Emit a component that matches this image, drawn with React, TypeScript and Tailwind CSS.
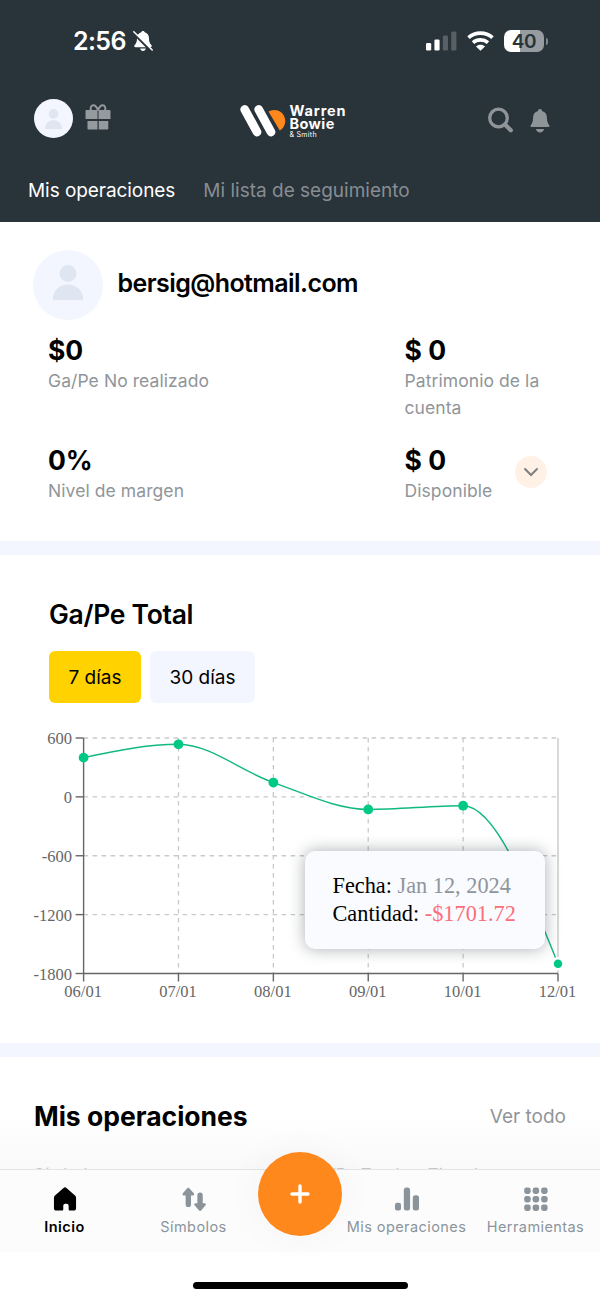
import type { ReactNode } from "react";

const points = [
  { day: "06/01", value: 400 },
  { day: "07/01", value: 536 },
  { day: "08/01", value: 146 },
  { day: "09/01", value: -128 },
  { day: "10/01", value: -90 },
  { day: "12/01", value: -1701.72 },
];

const yTicks = [600, 0, -600, -1200, -1800];

const plot = { left: 83.6, right: 558, top: 18, bottom: 253.5 };

const xAt = (i: number) => plot.left + (i * (plot.right - plot.left)) / (points.length - 1);
const yAt = (value: number) => plot.top + ((600 - value) / 2400) * (plot.bottom - plot.top);

// Monotone cubic interpolation, x values are evenly spaced
function monotonePath(coords: Array<[number, number]>) {
  const n = coords.length;
  const step = coords[1][0] - coords[0][0];
  const slopes = coords.slice(1).map(([, y], i) => (y - coords[i][1]) / step);
  const tangents = coords.map((_, i) => {
    if (i === 0 || i === n - 1) return 0;
    const a = slopes[i - 1];
    const b = slopes[i];
    if (a * b <= 0) return 0;
    return Math.sign(a) * 2 * Math.min(Math.abs(a), Math.abs(b), Math.abs(a + b) / 4);
  });
  tangents[0] = (3 * slopes[0] - tangents[1]) / 2;
  tangents[n - 1] = (3 * slopes[n - 2] - tangents[n - 2]) / 2;

  const third = step / 3;
  return coords.slice(1).reduce((d, [x, y], i) => {
    const [px, py] = coords[i];
    return `${d} C${px + third},${py + tangents[i] * third} ${x - third},${y - tangents[i + 1] * third} ${x},${y}`;
  }, `M${coords[0][0]},${coords[0][1]}`);
}

function PersonIcon({ className }: { className?: string }) {
  return (
    <svg viewBox="0 0 30 35" className={className} fill="#e0e5f2">
      <circle cx="15" cy="8.5" r="8.5" />
      <path d="M0 35v-1.5a15 14 0 0 1 30 0V35Z" />
    </svg>
  );
}

function StatusBar() {
  return (
    <div className="flex h-[80px] items-center pl-[73px] pr-[52px] pt-[2px] text-white">
      <span className="w-[54px] text-[25px] font-semibold leading-none tracking-[-0.6px]">2:56</span>
      <svg viewBox="0 0 20 22" className="ml-[5.500px] h-[22px] w-[20px]">
        <path
          fill="#fff"
          d="M10 1c.9 0 1.600.6 1.800 1.300C14.700 3.100 16 5.500 16 8.300c0 3.200.7 5 1.900 6.300.5.500.9 1 .9 1.500 0 .700-.5 1.100-1.300 1.100h-15c-.8 0-1.300-.4-1.300-1.100 0-.5.400-1 .9-1.500C3.300 13.300 4 11.500 4 8.300c0-2.800 1.300-5.200 4.200-6C8.400 1.600 9.100 1 10 1ZM7.200 18.500h5.600c-.2 1.500-1.300 2.500-2.800 2.500s-2.600-1-2.800-2.500Z"
        />
        <path d="M0.500 3.300 18 20.800" stroke="#29333a" strokeWidth="2.400" />
        <path d="M0.800 1.800 19.200 20" stroke="#fff" strokeWidth="1.500" strokeLinecap="round" />
      </svg>

      <svg viewBox="0 0 31 20" className="ml-auto h-[20px] w-[31px]" fill="#fff">
        <rect x="0" y="12" width="5.200" height="7.500" rx="1.300" />
        <rect x="8.400" y="8.500" width="5.200" height="11" rx="1.300" />
        <rect x="16.800" y="4.500" width="5.200" height="15" rx="1.300" opacity=".22" />
        <rect x="25.200" y="0.500" width="5.200" height="19" rx="1.300" opacity=".22" />
      </svg>
      <svg viewBox="0 0 27 20" className="ml-[10px] h-[20px] w-[27px]" fill="none" stroke="#fff" strokeWidth="3.700">
        <path d="M1.500 6.600C8.300.7 18.700.7 25.500 6.600" />
        <path d="M6 11.600c4.300-3.600 10.700-3.600 15 0" />
        <path d="M13.500 19.700 9 15.400c2.500-2.100 6.500-2.100 9 0Z" fill="#fff" stroke="none" />
      </svg>
      <div className="ml-[10px] flex h-[22px] w-[40px] items-center justify-center rounded-[7px] bg-linear-to-r from-white from-40% to-[#979ca1] to-40% text-[19px] font-semibold leading-none tracking-[-0.3px] text-[#29333a]">
        40
      </div>
      <div className="ml-[1.500px] h-[7px] w-[2.500px] rounded-r-full bg-[#7f858a]" />
    </div>
  );
}

function Logo() {
  return (
    <div className="flex items-start">
      <svg viewBox="0 0 46 34" className="h-[34px] w-[46px]">
        <path d="M28.500 7.500A10.300 10.300 0 0 1 39.800 26.500Z" fill="#ff881c" />
        <path d="M4.700 5.500 17 28" stroke="#29333a" strokeWidth="11" strokeLinecap="round" />
        <path d="M18.700 5.500 31 28" stroke="#29333a" strokeWidth="11" strokeLinecap="round" />
        <path d="M4.700 5.500 17 28" stroke="#fff" strokeWidth="8.800" strokeLinecap="round" />
        <path d="M18.700 5.500 31 28" stroke="#fff" strokeWidth="8.800" strokeLinecap="round" />
      </svg>
      <div className="ml-[4px] flex flex-col text-[14.500px] font-bold leading-[13px] text-white">
        <span className="tracking-[0.850px]">Warren</span>
        <span className="tracking-[0.400px]">Bowie</span>
        <span className="text-[7px] font-normal leading-[9px] tracking-[0.3px]">&amp; Smith</span>
      </div>
    </div>
  );
}

function AppBar() {
  return (
    <div className="flex h-[80px] items-start pl-[33.500px] pr-[50px] pt-[19px]">
      <div className="flex h-[39px] w-[39px] items-center justify-center rounded-full bg-[#f3f6ff]">
        <PersonIcon className="h-[20px] w-[17px]" />
      </div>
      <svg viewBox="0 0 26 26" className="ml-[12px] mt-[5px] h-[26px] w-[26px]" fill="#959a9e">
        <path d="M1.500 6h23c.6 0 1 .4 1 1v8h-12V6h-1v9H.5V7c0-.6.400-1 1-1Z" />
        <path d="M2.500 17h10v8.500h-9c-.6 0-1-.4-1-1ZM13.700 17h9.600V24.500c0 .6-.4 1-1 1h-8.600Z" />
        <path
          d="M13 6.500C12 3.500 10.500 1.300 8.300 1.300S5 3.500 6 6.500M13 6.500c1-3 2.500-5.200 4.700-5.200S21 3.500 20 6.500"
          fill="none"
          stroke="#959a9e"
          strokeWidth="1.900"
        />
      </svg>
      <div className="ml-[129px] mt-[4.500px]">
        <Logo />
      </div>
      <svg viewBox="0 0 26 26" className="ml-auto mt-[8px] h-[26px] w-[26px]" fill="none" stroke="#8f9499">
        <circle cx="10.500" cy="11" r="8.800" strokeWidth="3.300" />
        <path d="m17 17.500 5.800 5.800" strokeWidth="4.200" strokeLinecap="round" />
      </svg>
      <svg viewBox="0 0 20 24" className="ml-[16px] mt-[10px] h-[24px] w-[20px]" fill="#8f9499">
        <path d="M10 0c1.300 0 2 .8 2 1.900 3.200.8 4.900 3.300 4.900 6.600 0 4.200 1.100 6.200 2.400 7.800.6.800.2 1.700-.8 1.700h-17c-1 0-1.400-.9-.8-1.700C2 14.700 3.100 12.700 3.100 8.500c0-3.300 1.700-5.800 4.900-6.600C8 .8 8.700 0 10 0ZM6 20h8c-.3 2-1.900 3.500-4 3.500S6.300 22 6 20Z" />
      </svg>
    </div>
  );
}

function Header() {
  return (
    <header className="h-[222px] shrink-0 bg-[#29333a]">
      <StatusBar />
      <AppBar />
      <nav className="flex gap-[28px] pl-[28px] pt-[17px] text-[19px] leading-[28px]">
        <span className="tracking-[-0.060px] text-white">Mis operaciones</span>
        <span className="text-[#878d92]">Mi lista de seguimiento</span>
      </nav>
    </header>
  );
}

function Metric({ value, label }: { value: string; label: string }) {
  return (
    <div className="h-[110px]">
      <p className="text-[26.500px] font-bold leading-[33px]">{value}</p>
      <p className="text-[17.500px] leading-[27px] tracking-[0.080px] text-[#90959a]">{label}</p>
    </div>
  );
}

function AccountSummary() {
  return (
    <section className="h-[319px] shrink-0 pt-[28px]">
      <div className="flex items-start pl-[33px]">
        <div className="flex h-[70px] w-[70px] items-start justify-center rounded-full bg-[#f3f6ff] pt-[15px]">
          <PersonIcon className="h-[35px] w-[30px]" />
        </div>
        <h2 className="ml-[14.500px] mt-[18px] text-[25px] font-semibold leading-[30px] tracking-[-0.570px]">bersig@hotmail.com</h2>
      </div>
      <div className="mt-[14px] grid grid-cols-[356.500px_150px] pl-[48px]">
        <Metric value="$0" label="Ga/Pe No realizado" />
        <Metric value="$ 0" label="Patrimonio de la cuenta" />
        <Metric value="0%" label="Nivel de margen" />
        <div className="flex">
          <Metric value="$ 0" label="Disponible" />
          <button className="ml-auto mr-[8px] mt-[11.500px] flex h-[32px] w-[32px] items-center justify-center rounded-full bg-[#fff1e6]">
            <svg viewBox="0 0 16 10" className="h-[10px] w-[16px]" fill="none" stroke="#7d7f82" strokeWidth="2">
              <path d="m2 2 6 6 6-6" strokeLinecap="round" />
            </svg>
          </button>
        </div>
      </div>
    </section>
  );
}

function ProfitChart() {
  const coords = points.map((p, i): [number, number] => [xAt(i), yAt(p.value)]);

  return (
    <svg viewBox="0 0 600 290" className="block h-[290px] w-[600px] font-['Liberation_Serif',serif]">
      <g stroke="#c9c9c9" strokeWidth="1.300" strokeDasharray="4.500 4.500">
        {yTicks.slice(0, -1).map((tick) => (
          <line key={tick} x1={plot.left} x2={plot.right} y1={yAt(tick)} y2={yAt(tick)} />
        ))}
        {points.slice(1, -1).map((p, i) => (
          <line key={p.day} x1={xAt(i + 1)} x2={xAt(i + 1)} y1={plot.top} y2={plot.bottom} />
        ))}
      </g>
      <line x1={plot.right} x2={plot.right} y1={plot.top} y2={plot.bottom} stroke="#cccccc" strokeWidth="1.500" />
      <g stroke="#666666" strokeWidth="1.400">
        <path d={`M${plot.left} ${plot.top}V${plot.bottom}H${plot.right}`} fill="none" />
        {yTicks.map((tick) => (
          <line key={tick} x1={plot.left - 8} x2={plot.left} y1={yAt(tick)} y2={yAt(tick)} />
        ))}
        {points.map((p, i) => (
          <line key={p.day} x1={xAt(i)} x2={xAt(i)} y1={plot.bottom} y2={plot.bottom + 8} />
        ))}
      </g>
      <g fill="#666666" fontSize="16.500">
        {yTicks.map((tick) => (
          <text key={tick} x="72" y={yAt(tick) + 6} textAnchor="end">
            {tick}
          </text>
        ))}
        {points.map((p, i) => (
          <text key={p.day} x={xAt(i) - 0.5} y="276.500" textAnchor="middle">
            {p.day}
          </text>
        ))}
      </g>
      <path d={monotonePath(coords)} fill="none" stroke="#10b981" strokeWidth="1.400" />
      {coords.slice(0, -1).map(([x, y]) => (
        <circle key={x} cx={x} cy={y} r="4.900" fill="#00c983" />
      ))}
      <circle cx={coords[5][0]} cy={coords[5][1]} r="5.500" fill="#00c983" stroke="#fff" strokeWidth="2.500" />
    </svg>
  );
}

function ChartSection() {
  return (
    <section className="h-[488px] shrink-0 pt-[41px]">
      <h2 className="pl-[49px] text-[26.500px] font-semibold leading-[36px] tracking-[-0.300px]">Ga/Pe Total</h2>
      <div className="mt-[19px] flex gap-[9px] pl-[49px] text-[19px]">
        <button className="h-[52px] w-[92px] rounded-[6px] bg-[#ffd200] pt-[2px]">7 días</button>
        <button className="h-[52px] w-[105px] rounded-[6px] bg-[#f3f6ff] pt-[2px]">30 días</button>
      </div>
      <div className="relative mt-[17px]">
        <ProfitChart />
        <div className="absolute left-[305px] top-[131px] flex h-[98px] w-[240px] flex-col justify-center rounded-[10px] bg-[#fafbff] pl-[27.500px] font-['Liberation_Serif',serif] text-[22.300px] leading-[28px] shadow-[0_0_16px_rgba(41,51,58,0.4)]">
          <p>
            Fecha: <span className="text-[#8f959c]">Jan 12, 2024</span>
          </p>
          <p>
            Cantidad: <span className="text-[#fb6f7a]">-$1701.72</span>
          </p>
        </div>
      </div>
    </section>
  );
}

function OperationsSection() {
  return (
    <section className="h-[112px] shrink-0 overflow-hidden bg-linear-to-b from-white from-55% to-[#f9f9f9] pl-[34px] pr-[34px] pt-[40px]">
      <div className="flex items-center justify-between">
        <h2 className="text-[26.500px] font-bold leading-[38px]">Mis operaciones</h2>
        <span className="pt-[1px] text-[19px] leading-[28px] text-[#90959a]">Ver todo</span>
      </div>
      <div className="mt-[27px] flex whitespace-nowrap text-[16px] leading-[24px] text-[#c4c6c8]">
        <span className="w-[274px] tracking-[0.400px]">Símbolo</span>
        <span className="w-[86px] tracking-[0.400px]">Ga/Pe Total</span>
        <span className="ml-[34px] tracking-[0.400px]">Tipo de cuenta</span>
      </div>
    </section>
  );
}

function NavItem({ label, active, children }: { label: string; active?: boolean; children: ReactNode }) {
  return (
    <div className={`flex w-[129px] flex-col items-center ${active ? "font-semibold text-black" : "text-[#8b949b]"}`}>
      <svg viewBox="0 0 26 26" className="h-[25px] w-[26px]" fill="currentColor">
        {children}
      </svg>
      <span className="mt-[5px] whitespace-nowrap text-[14.500px] leading-[20px] tracking-[0.420px]">{label}</span>
    </div>
  );
}

function BottomNav() {
  return (
    <footer className="relative h-[131px] shrink-0 bg-white">
      <div className="flex h-[83px] border-t border-[#e3e4e5] bg-[#fcfcfc] pt-[17px]">
        <NavItem label="Inicio" active>
          <path d="M11.200 1.200a2.600 2.600 0 0 1 3.600 0l8.600 7.700c.8.700 1.100 1.500 1.100 2.500v10.600c0 1.600-.9 2.500-2.500 2.500h-3.900c-.9 0-1.300-.5-1.300-1.300v-3.500c0-1.500-.9-2.200-2.200-2.200h-1.200c-1.300 0-2.200.7-2.200 2.200v3.500c0 .8-.4 1.300-1.300 1.300H4c-1.600 0-2.500-.9-2.500-2.500V11.400c0-1 .3-1.800 1.100-2.500Z" />
        </NavItem>
        <NavItem label="Símbolos">
          <path d="M6 1.300c.6-.6 1.500-.6 2.100 0l4.700 5.300c.8.900.3 2.200-.9 2.200H9.900v9.300a2.800 2.800 0 0 1-5.600 0V8.800h-2c-1.200 0-1.700-1.300-.9-2.200Z" />
          <path d="M20.400 24.400c-.6.600-1.500.6-2.100 0l-4.700-5.300c-.8-.9-.3-2.200.9-2.200h2V8.600a2.800 2.800 0 0 1 5.600 0v8.300h2c1.200 0 1.700 1.300.9 2.200Z" />
        </NavItem>
        <div className="w-[84px]" />
        <NavItem label="Mis operaciones">
          <rect x="0.500" y="16.500" width="6.300" height="8" rx="2.200" />
          <rect x="9.700" y="0.500" width="6.500" height="24" rx="2.600" />
          <rect x="19" y="8.500" width="6.500" height="16" rx="2.600" />
        </NavItem>
        <NavItem label="Herramientas">
          {[3.9, 12.7, 21.5].map((cy) =>
            [4.1, 12.9, 21.7].map((cx) => <rect key={`${cx}-${cy}`} x={cx - 3.4} y={cy - 3.4} width="6.800" height="6.800" rx="2.500" />),
          )}
        </NavItem>
      </div>
      <button className="absolute left-[258px] top-[-17px] flex h-[84px] w-[84px] items-center justify-center rounded-full bg-[#ff881c] shadow-[0_0_40px_rgba(0,0,0,0.04)]">
        <svg viewBox="0 0 20 20" className="h-[20px] w-[20px]" stroke="#fff" strokeWidth="3.400" strokeLinecap="round">
          <path d="M10 2v16M2 10h16" />
        </svg>
      </button>
      <div className="mx-auto mt-[30px] h-[7px] w-[215px] rounded-full bg-black" />
    </footer>
  );
}

export default function App() {
  return (
    <main className="flex h-[1300px] w-[600px] flex-col overflow-hidden bg-white font-[Inter,'Liberation_Sans',sans-serif] text-black">
      <Header />
      <AccountSummary />
      <div className="h-[14px] shrink-0 bg-[#f3f6ff]" />
      <ChartSection />
      <div className="h-[14px] shrink-0 bg-[#f3f6ff]" />
      <OperationsSection />
      <BottomNav />
    </main>
  );
}
